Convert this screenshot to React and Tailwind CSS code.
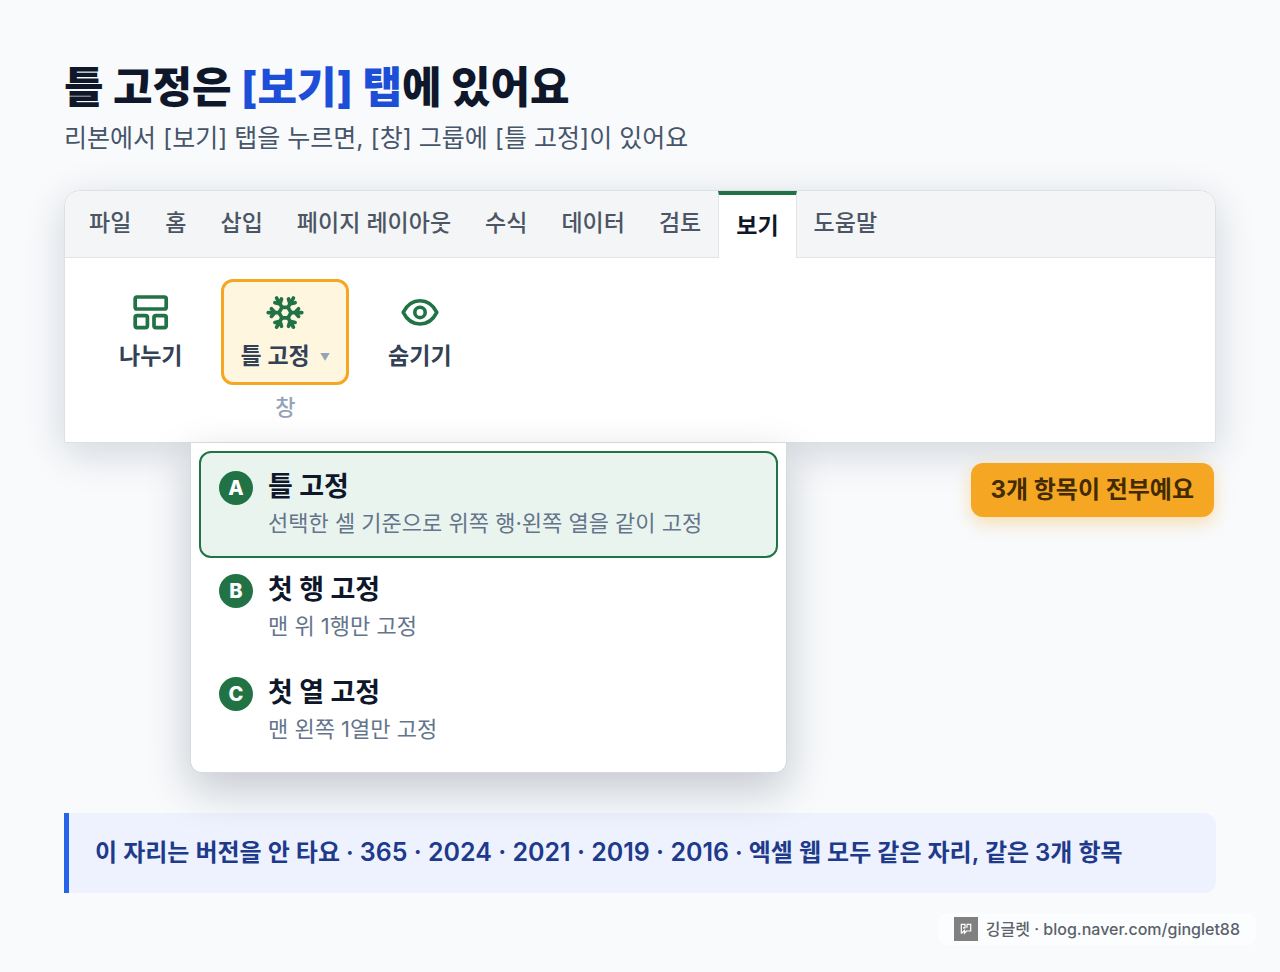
const tabs = ["파일", "홈", "삽입", "페이지 레이아웃", "수식", "데이터", "검토", "보기", "도움말"];

const menu = [
  { key: "A", title: "틀 고정", note: "선택한 셀 기준으로 위쪽 행·왼쪽 열을 같이 고정" },
  { key: "B", title: "첫 행 고정", note: "맨 위 1행만 고정" },
  { key: "C", title: "첫 열 고정", note: "맨 왼쪽 1열만 고정" },
];

function SplitIcon() {
  return (
    <svg className="size-11" viewBox="0 0 44 44" fill="none" stroke="currentColor" strokeWidth="3.7" aria-hidden="true">
      <rect x="6.200" y="7" width="31" height="12" rx="1.800" />
      <rect x="6.200" y="25.600" width="12.200" height="12" rx="1.800" />
      <rect x="25" y="25.600" width="12.200" height="12" rx="1.800" />
    </svg>
  );
}

function SnowflakeIcon() {
  return (
    <svg className="size-11" viewBox="-22 -22.600 44 44" fill="none" stroke="currentColor" strokeWidth="3.7" strokeLinecap="round" strokeLinejoin="round" aria-hidden="true">
      <path d="M6 0L3 5.200H-3L-6 0L-3 -5.200H3Z" />
      {[0, 60, 120, 180, 240, 300].map((angle) => (
        <path key={angle} d="M6 0H16.800M13.600 -3.800L10 0L13.600 3.800" transform={`rotate(${angle})`} />
      ))}
    </svg>
  );
}

function EyeIcon() {
  return (
    <svg className="size-11" viewBox="0 0 44 44" fill="none" stroke="currentColor" strokeWidth="3.6" strokeLinejoin="round" aria-hidden="true">
      <path d="M5.200 22.400C9 14.800 14.800 10.800 22 10.800S35 14.800 38.800 22.400C35 30 29.200 34 22 34S9 30 5.200 22.400Z" />
      <circle cx="22" cy="22.400" r="5.200" />
    </svg>
  );
}

const tools = [
  { label: "나누기", Icon: SplitIcon },
  { label: "틀 고정", Icon: SnowflakeIcon, active: true },
  { label: "숨기기", Icon: EyeIcon },
];

export default function App() {
  return (
    <div className="flex min-h-screen flex-col bg-[#f8fafc] px-16 pt-15 font-['Inter','Noto_Sans_CJK_KR',sans-serif]">
      <header>
        <h1 className="text-[43px] leading-[54px] font-extrabold text-[#0f172a]">
          틀 고정은 <span className="text-[#1d4ed8]">[보기] 탭</span>에 있어요
        </h1>
        <p className="mt-1 text-[25px] leading-10 text-[#475569]">
          리본에서 [보기] 탭을 누르면, [창] 그룹에 [틀 고정]이 있어요
        </p>
      </header>

      <main className="mt-8">
        <section className="rounded-t-2xl border border-[#dde1e6] bg-white shadow-[0_10px_40px_rgba(15,23,42,0.16)]">
          <nav className="flex h-[67px] rounded-t-2xl border-b border-[#e1e5e9] bg-[#f3f5f7] pl-[7px]">
            {tabs.map((tab) =>
              tab === "보기" ? (
                <button key={tab} className="-mb-px border-x border-t-4 border-x-[#e1e5e9] border-t-[#217346] bg-white px-[17px] text-[23px] font-bold text-[#0f172a]">
                  {tab}
                </button>
              ) : (
                <button key={tab} className="px-[17px] pb-0.5 text-[23px] font-medium text-[#4b5563]">
                  {tab}
                </button>
              )
            )}
          </nav>
          <div className="flex px-[35px] pt-[21px] pb-[19px]">
            <div className="flex flex-col items-center">
              <div className="flex gap-5 text-[#217346]">
                {tools.map(({ label, Icon, active }) => (
                  <button
                    key={label}
                    className={
                      active
                        ? "flex flex-col items-center gap-0.5 rounded-xl border-3 border-[#f5a623] bg-[#fff6e0] px-4 pt-2 pb-1.5"
                        : "flex flex-col items-center gap-0.5 rounded-xl border-3 border-transparent px-4 pt-2 pb-1.5"
                    }
                  >
                    <Icon />
                    <span className="flex items-center gap-2.5 text-[23px] leading-10 font-semibold text-[#334155]">
                      {label}
                      {active && <span className="pt-0.5 text-[10px] leading-4 text-[#94a3b8]">▼</span>}
                    </span>
                  </button>
                ))}
              </div>
              <p className="mt-1.5 text-[22px] leading-8 font-medium text-[#94a3b8]">창</p>
            </div>
          </div>
        </section>

        <div className="flex items-start justify-between pr-0.5 pl-[126px]">
          <ul className="w-[597px] rounded-b-xl border border-t-0 border-[#d5dae0] bg-white p-2 shadow-[0_16px_44px_rgba(15,23,42,0.22)]">
            {menu.map((item) => (
              <li key={item.key}>
                <button
                  className={
                    item.key === "A"
                      ? "flex w-full gap-[15px] rounded-xl border-2 border-[#217346] bg-[#e9f4ee] px-[18px] pt-4 pb-[15px] text-left"
                      : "flex w-full gap-[15px] rounded-xl border-2 border-transparent px-[18px] pt-3 pb-[15px] text-left"
                  }
                >
                  <span className="mt-0.5 flex size-[34px] shrink-0 items-center justify-center rounded-full bg-[#217346] text-xl font-extrabold text-white">
                    {item.key}
                  </span>
                  <span className="flex flex-col">
                    <span className="text-[27px] leading-9 font-bold text-[#0f172a]">{item.title}</span>
                    <span className="text-[22px] leading-9 text-[#64748b]">{item.note}</span>
                  </span>
                </button>
              </li>
            ))}
          </ul>
          <p className="mt-5 rounded-xl bg-[#f5a623] px-5 py-2 text-2xl leading-[38px] font-bold text-[#422b00] shadow-[0_6px_18px_rgba(245,166,35,0.35)]">
            3개 항목이 전부예요
          </p>
        </div>

        <p className="mt-10 rounded-r-xl border-l-[5px] border-[#2563eb] bg-[#eef2ff] px-[26px] py-5 text-2xl leading-10 font-semibold text-[#1e3a8a]">
          이 자리는 버전을 안 타요 · <span className="text-[25px] leading-8">365 · 2024 · 2021 · 2019 · 2016</span> · 엑셀 웹 모두 같은 자리, 같은 3개 항목
        </p>
      </main>

      <footer className="-mr-10 mt-5 flex justify-end">
        <a href="https://blog.naver.com/ginglet88" className="flex items-center gap-2 rounded-lg bg-white/50 px-4 py-1 text-base leading-6 font-medium text-[#5b626b]">
          <svg className="size-6" viewBox="0 0 24 24" fill="none" stroke="#fff" strokeWidth="1.2" aria-hidden="true">
            <rect width="24" height="24" fill="#808080" stroke="none" />
            <path d="M7.300 16.500V7.300H11V10.800H9M13 7.300V10.800M13 7.300H16.700V14H12.500L10.500 16.200V13.500L7.300 16.500" />
          </svg>
          깅글렛 · blog.naver.com/ginglet88
        </a>
      </footer>
    </div>
  );
}
